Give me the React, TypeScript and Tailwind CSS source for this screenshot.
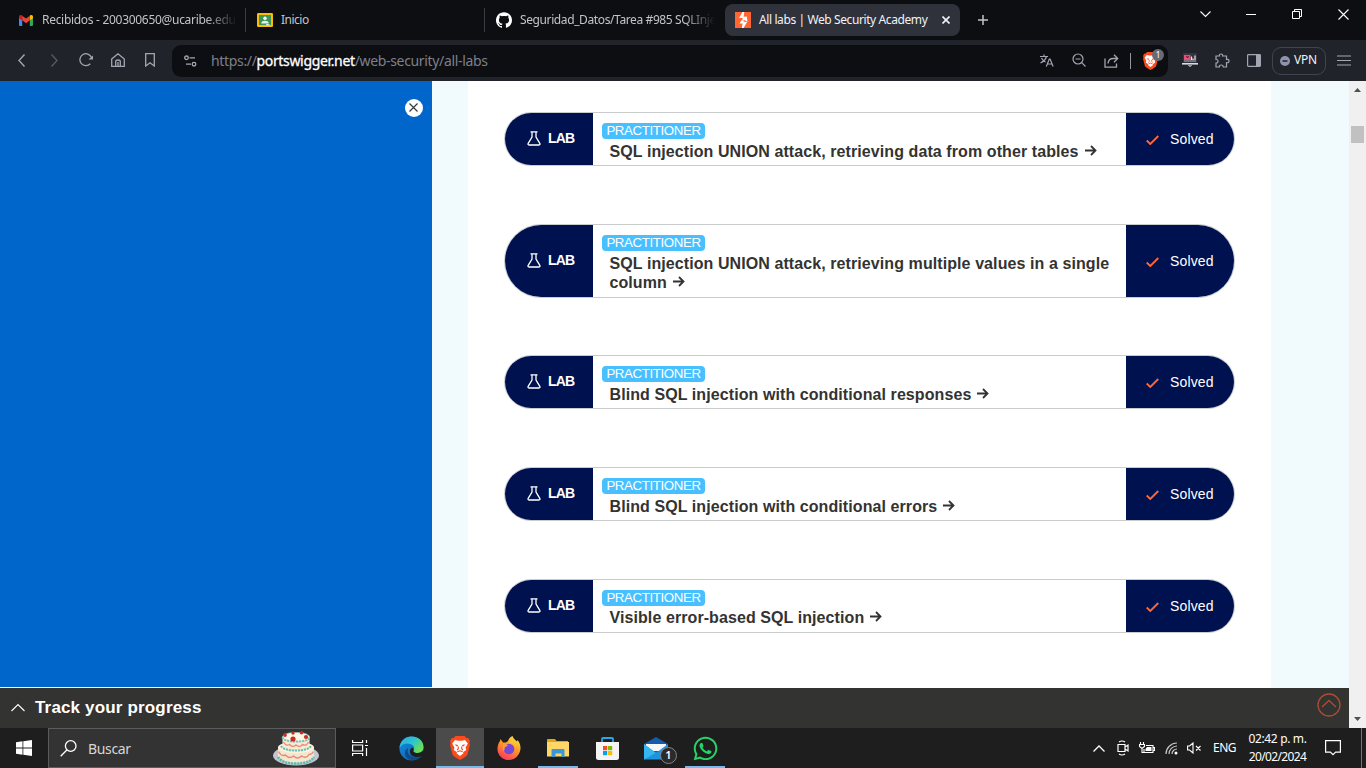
import type { ReactNode } from "react";
import { SiGithub } from "react-icons/si";
import { FaWhatsapp } from "react-icons/fa";

function Box({ children, className = "w-8" }: { children: ReactNode; className?: string }) {
  return <div className={`flex h-full shrink-0 items-center justify-center ${className}`}>{children}</div>;
}

function Line({ d, w = 16, h = 16, sw = 1.3, className = "" }: { d: string; w?: number; h?: number; sw?: number; className?: string }) {
  return (
    <svg width={w} height={h} viewBox={`0 0 ${w} ${h}`} fill="none" stroke="currentColor" strokeWidth={sw} className={`shrink-0 ${className}`}>
      <path d={d} />
    </svg>
  );
}

function GmailIcon() {
  return (
    <svg width="14" height="11" viewBox="0 0 14 11" className="shrink-0">
      <path d="M0 2h3.200v9H1a1 1 0 0 1-1-1z" fill="#4285f4" />
      <path d="M10.800 2H14v8a1 1 0 0 1-1 1h-2.200z" fill="#34a853" />
      <path d="M0 1.700C0 0 2 -.5 3.200.5V5.500L0 3.200z" fill="#c5221f" />
      <path d="M14 1.700C14 0 12-.5 10.800.5V5.500L14 3.200z" fill="#fbbc04" />
      <path d="M3.200.7L7 3.500 10.800.7V5.300L7 8.200 3.200 5.300z" fill="#ea4335" />
    </svg>
  );
}

function ClassroomIcon() {
  return (
    <svg width="16" height="14" viewBox="0 0 16 14" className="shrink-0">
      <rect width="16" height="14" rx="1.200" fill="#fbbc04" />
      <rect x="2" y="2" width="12" height="10" fill="#3c9657" />
      <circle cx="8" cy="5.300" r="1.700" fill="#fff" />
      <path d="M4.200 10.500c0-2 2-2.700 3.800-2.700s3.800.7 3.800 2.700z" fill="#e6f4ea" />
      <path d="M9 11h3.500v1.500H9z" fill="#d5e0d5" />
    </svg>
  );
}

function PortSwiggerIcon() {
  return (
    <svg width="16" height="16" viewBox="0 0 16 16" className="shrink-0">
      <rect width="16" height="16" fill="#ff6633" />
      <path d="M7.500 0H9.300L8.600 4.700H11.800L9.500 8H7.300L7.800 6H4z" fill="#fff" />
      <path d="M8.500 16H6.900L7.500 11.500H4.500L6.500 8.300h2.300L8.500 9.800H12.300z" fill="#fff" />
      <path d="M9.500 4.700h2.300L12.500 9.500 9 8z" fill="#fff" />
    </svg>
  );
}

function TabStrip() {
  return (
    <div className="flex h-10 items-center bg-[#0d0e12] text-[12px] text-[#c3c4c8]">
      <div className="flex h-6 w-[246px] items-center border-r border-[#3a3c43] pl-[19px]">
        <GmailIcon />
        <div className="ml-[9px] w-[195px] whitespace-nowrap tracking-[-0.3px] [mask-image:linear-gradient(to_right,black_84%,transparent)]">
          Recibidos - 200300650@ucaribe.edu
        </div>
      </div>
      <div className="flex h-6 w-[239px] items-center border-r border-[#3a3c43] pl-[11px]">
        <ClassroomIcon />
        <span className="ml-2 tracking-[-0.5px]">Inicio</span>
      </div>
      <div className="flex h-6 w-[240px] items-center pl-[11px]">
        <SiGithub size={16} className="shrink-0 text-white" />
        <div className="ml-2 w-[195px] whitespace-nowrap tracking-[-0.39px] [mask-image:linear-gradient(to_right,black_84%,transparent)]">
          Seguridad_Datos/Tarea #985 SQLInje
        </div>
      </div>
      <div className="flex h-8 w-[235px] items-center rounded-lg bg-[#2f323b] pl-[10px] text-[#f2f3f7]">
        <PortSwiggerIcon />
        <div className="ml-2 w-[180px] whitespace-nowrap tracking-[-0.4px]">All labs | Web Security Academy</div>
        <Line w={8} h={8} sw={1.6} d="M.5.5l7 7M7.500.5l-7 7" className="ml-[3px]" />
      </div>
      <Box className="w-[46px]"><Line w={10} h={10} sw={1.5} d="M5 0v10M0 5h10" /></Box>
      <div className="ml-auto flex h-7 items-center self-start text-white">
        <Box className="w-[46px]"><Line w={11} h={7} sw={1.1} d="M.5.5l5 5 5-5" /></Box>
        <Box className="w-[46px]"><Line w={10} h={2} sw={1} d="M0 1.500h10" /></Box>
        <Box className="w-[46px]"><Line w={10} h={10} sw={1} d="M.5 2.500h7v7h-7zM2.500 2.500v-2h7v7h-2" /></Box>
        <Box className="w-[46px]"><Line w={11} h={11} sw={1.1} d="M.5.5l10 10M10.500.5l-10 10" /></Box>
      </div>
    </div>
  );
}

function BraveLion({ small }: { small?: boolean }) {
  return (
    <svg viewBox="0 0 20 24" className={small ? "h-[18px] w-[15px]" : "h-6 w-5"}>
      <path d="M5.500 0h9l2 2 2 .3 1.500 3-.7 2L20 9l-2.500 9.500Q17 20 10 24 3 20 2.500 18.500L0 9l.7-1.700L0 5.300l1.500-3 2-.3z" fill="#fb4a1c" />
      <path d="M5 4l3 .7h4L15 4l2.800 3.500-2.300 4.200.8 2.300-3.300 2.200.5 1L10 20l-3.500-2.800.5-1L3.700 14l.8-2.300L2.200 7.500z" fill="#fff" />
      <path d="M5 8.200l3 .9-.4 1.400L6 10zM15 8.200l-3 .9.4 1.400L14 10z" fill="#fb4a1c" />
      <path d="M8.300 10.500v2.200L7 14.200M11.700 10.500v2.200l1.300 1.500M7.300 15.800L10 14.800l2.700 1" fill="none" stroke="#fb4a1c" strokeWidth="1.100" />
    </svg>
  );
}

function Toolbar() {
  return (
    <div className="flex h-[41px] items-center bg-[#21232b] pl-[6px] text-[#a3a6b2]">
      <Box><Line w={8} h={13} sw={1.4} d="M6.500.5l-5.500 6 5.500 6" /></Box>
      <Box><Line w={8} h={13} sw={1.4} d="M1.500.5l5.500 6-5.500 6" className="text-[#565963]" /></Box>
      <Box>
        <svg width="15" height="14" viewBox="0 0 15 14" className="-mt-px shrink-0" fill="none" stroke="currentColor" strokeWidth="1.300">
          <path d="M11.300 10.800a6 6 0 1 1 1.200-6.300" />
          <path d="M14 2.500V6.500H9.500z" fill="currentColor" stroke="none" />
        </svg>
      </Box>
      <Box><Line w={14} h={14} sw={1.3} d="M.7 6L7 .8 13.300 6v7.300H.7zM4.700 13V8.500q0-1.500 2.300-1.500t2.300 1.500V13M7 9v4" className="-mt-px" /></Box>
      <Box><Line w={10} h={14} sw={1.3} d="M.7.7h8.600v12.300L5 9.800.7 13z" className="-mt-px" /></Box>
      <div className="ml-[6px] flex h-8 w-[996px] items-center rounded-[9px] bg-[#0d0e12] pl-[2px]">
        <Box>
          <svg width="13" height="12" viewBox="0 0 13 12" fill="none" stroke="currentColor" strokeWidth="1.300">
            <circle cx="2.500" cy="2.800" r="1.800" /><path d="M5.500 2.800H11M2 9.200h5" /><circle cx="10" cy="9.200" r="1.800" />
          </svg>
        </Box>
        <div className="-mt-px ml-[5px] whitespace-nowrap text-[14px] tracking-[-0.34px] text-[#7d808a]">
          https://<span className="text-white [-webkit-text-stroke:0.3px_white]">portswigger.net</span>/web-security/all-labs
        </div>
        <div className="ml-auto flex h-full items-center pr-[2px]">
          <Box><Line w={14} h={13} sw={1.2} d="M0 2.500h8M4 .5v2M6.500 2.500Q5.500 6.500.5 9M1.500 4Q3 7 5.500 8M6.300 12.500l3-7.500h.8l3 7.500M7.500 10h4.500" /></Box>
          <Box><Line w={14} h={14} sw={1.2} d="M11 6A5 5 0 1 1 1 6A5 5 0 1 1 11 6M9.700 9.700l3.800 3.800M3.500 6h5" className="-mt-px" /></Box>
          <Box><Line w={15} h={14} sw={1.3} d="M1 4.500v8.700h11.500V9.500M4 9.500Q4.500 4.500 9 4.500h4.500M10 .8l3.700 3.700L10 8.200" /></Box>
          <div className="mx-[3px] h-4 w-px bg-[#9497a2]" />
          <div className="relative flex h-8 w-8 items-center justify-center">
            <BraveLion small />
            <div className="absolute top-[4px] left-[18px] flex size-3 items-center justify-center rounded-full bg-[#686a77] text-[8px] text-white">1</div>
          </div>
        </div>
      </div>
      <div className="ml-[6px] flex h-full items-center">
        <Box>
          <svg width="16" height="15" viewBox="0 0 16 15">
            <path d="M1 0h14v10H1z" fill="#34343f" /><path d="M2 2h6.500v5H2z" fill="#f34b78" /><path d="M4.500 3l1 2 1-2" stroke="#5b1630" fill="none" /><path d="M9.500 3.500v3.500M11 5.500v1.500M13 2.500v4.500" stroke="#e8eaef" strokeWidth="1.200" /><path d="M2 8h12" stroke="#aab0ba" /><path d="M0 10.800h16" stroke="#d9dbe0" strokeWidth="1.600" /><path d="M6 12h4v1H9v1H7v-1H6z" fill="#8794a1" />
          </svg>
        </Box>
        <Box><Line w={15} h={15} sw={1.2} d="M1 3h3.500Q4 1 6 1t1.600 2H11.500v3.500Q14 6 14 8t-2.500 1.700V14H8.300Q8.300 12 6.300 12T4.300 14H1V10Q3 10 3 8.200T1 6.500z" /></Box>
        <Box>
          <svg width="14" height="13" viewBox="0 0 14 13"><rect x=".6" y=".6" width="12.800" height="11.800" rx=".8" fill="none" stroke="currentColor" strokeWidth="1.200" /><path d="M9 1h4.500v11H9z" fill="currentColor" /></svg>
        </Box>
        <div className="ml-[2px] flex h-7 w-[54px] items-center rounded-[9px] border border-[#41444f] pl-[7px] text-[12px] text-[#f0f1f5]">
          <svg width="10" height="10" viewBox="0 0 10 10" className="shrink-0"><circle cx="5" cy="5" r="5" fill="#8f93ab" /><path d="M2.500 5h5" stroke="#21232b" strokeWidth="1.500" /></svg>
          <span className="-mt-px ml-1 tracking-[-0.2px]">VPN</span>
        </div>
        <Box className="ml-[2px] w-8"><Line w={14} h={11} sw={1.2} d="M0 1h14M0 5.500h14M0 10h14" /></Box>
      </div>
    </div>
  );
}

function Arrow() {
  return <Line w={12} h={11} sw={1.8} d="M0 5.500h11M6 1l4.500 4.500L6 10" className="ml-[6px] inline-block align-[1px]" />;
}

const labs = [
  { title: "SQL injection UNION attack, retrieving data from other tables", size: "h-[54px]", gap: "mt-[31px]", lift: "mt-[3px]" },
  { title: "SQL injection UNION attack, retrieving multiple values in a single column", size: "h-[74px]", gap: "mt-[58px]", lift: "mt-[3px]" },
  { title: "Blind SQL injection with conditional responses", size: "h-[54px]", gap: "mt-[57px]", lift: "mt-[3px]" },
  { title: "Blind SQL injection with conditional errors", size: "h-[54px]", gap: "mt-[58px]", lift: "mt-[3px]" },
  { title: "Visible error-based SQL injection", size: "h-[54px]", gap: "mt-[58px]", lift: "mt-[2px]" },
];

function LabRow({ title, size, gap, lift }: { title: string; size: string; gap: string; lift: string }) {
  return (
    <div className={`flex w-[731px] overflow-hidden rounded-full border border-[#c8cccd] bg-white ${size} ${gap}`}>
      <div className="flex w-[88px] shrink-0 items-center bg-[#00114f] pb-[2px] pl-[22px] text-white">
        <Line w={14} h={15} sw={1.3} d="M3.500.8h7M5 1v5L1.200 12.300Q.5 14 2 14h10q1.500 0 .8-1.700L9 6V1" />
        <span className="ml-[7px] text-[14px] font-bold tracking-[-0.8px]">LAB</span>
      </div>
      <div className="w-[533px] shrink-0 pt-[10px] pl-[9px]">
        <div className="flex h-4 w-[103px] items-center justify-center rounded-[4px] bg-[#48bfff] text-[13.300px] leading-4 whitespace-nowrap text-white">
          <span className="-mt-px tracking-[-0.4px]">PRACTITIONER</span>
        </div>
        <div className={`ml-[7.500px] text-[16px] leading-[19px] font-bold tracking-[0.085px] text-[#333332] ${lift}`}>
          {title}
          <Arrow />
        </div>
      </div>
      <div className="flex flex-1 items-center bg-[#00114f] pl-5 text-white">
        <Line w={13} h={10} sw={1.9} d="M.7 5.500L4.300 9 12.300 1" className="mt-[2px] text-[#ff6633]" />
        <span className="ml-[11px] text-[14px] tracking-[0.15px]">Solved</span>
      </div>
    </div>
  );
}

function Page() {
  return (
    <div className="flex h-[647px]">
      <div className="flex w-[1349px] flex-col">
        <div className="flex h-[607px] bg-[#f1fafc]">
          <div className="flex h-[606px] w-[432px] justify-end bg-[#0066cc] pt-[18px] pr-[9px]">
            <div className="flex size-[18px] items-center justify-center rounded-full bg-white text-[#333332]">
              <Line w={9} h={9} sw={1.1} d="M.5.5l8 8M8.500.5l-8 8" className="-mt-[2px] -ml-px" />
            </div>
          </div>
          <div className="ml-9 w-[803px] bg-white pl-9">
            {labs.map((lab) => <LabRow key={lab.title} {...lab} />)}
          </div>
        </div>
        <div className="flex h-10 items-center bg-[#333332] pr-[8px] pl-[11px] text-white">
          <Line w={14} h={9} sw={1.1} d="M.5 8L7 1.500 13.500 8" className="-mt-[2px]" />
          <span className="ml-[10px] text-[17px] font-bold tracking-[0.16px]">Track your progress</span>
          <svg width="24" height="24" viewBox="0 0 24 24" fill="none" stroke="#a84e33" strokeWidth="1.300" className="-mt-[6px] ml-auto">
            <circle cx="12" cy="12" r="11" /><path d="M5 14l7-6.500 7 6.500" />
          </svg>
        </div>
      </div>
      <div className="flex w-[17px] flex-col items-center bg-[#f0f0f0] pt-[7px] pb-[7px]">
        <svg width="7" height="4" viewBox="0 0 7 4"><path d="M0 4l3.500-4L7 4z" fill="#505050" /></svg>
        <div className="mt-[34px] h-[17px] w-[13px] bg-[#c1c1c1]" />
        <svg width="7" height="4" viewBox="0 0 7 4" className="mt-auto"><path d="M0 0l3.500 4L7 0z" fill="#505050" /></svg>
      </div>
    </div>
  );
}

function Cake() {
  return (
    <svg width="46" height="36" viewBox="0 0 46 36" className="shrink-0">
      <ellipse cx="23" cy="25.500" rx="23" ry="10" fill="#c3c5d0" />
      <path d="M5 17.500v9.500q3 6.500 18 6.500T41 27v-9.500z" fill="#f3e7cf" />
      <ellipse cx="23" cy="17.500" rx="18" ry="5.500" fill="#fff1da" />
      <path d="M9.500 7v9q3 4 13.500 4t13.500-4V7z" fill="#f8ead3" />
      <ellipse cx="23" cy="7" rx="13.500" ry="4.500" fill="#fff6e4" />
      <g fill="none" strokeWidth="2" strokeDasharray="2.200 .8">
        <path d="M9.500 7q1 4.500 13.500 4.500T36.500 7" stroke="#73c5ba" />
        <path d="M9.500 6.500Q12 2.500 23 2.500t13.500 4" stroke="#8fd0c5" strokeWidth="1" />
        <path d="M8 16q3 4.500 15 4.500T38 16" stroke="#66bfb4" />
        <path d="M5 27q4 6.500 18 6.500T41 27" stroke="#5dbbb0" strokeWidth="2.500" />
      </g>
      <path d="M10.500 12q2.500 4.500 6 2.500 3 3.500 6.500.5 4 3 6.500-.5 4 2 6-2.500M5.500 21.500q3 5.500 7 3.500 4 4.500 8 1 4 4 8 0 5 3 7.500-1.500 3 0 4.500-3" stroke="#e98a7c" strokeWidth="1.400" fill="none" />
      <g fill="#c82d2b"><circle cx="12" cy="5" r="1.900" /><circle cx="20" cy="3" r="1.700" /><circle cx="28.500" cy="2.800" r="1.800" /><circle cx="33" cy="7" r="2.100" /><circle cx="20" cy="9" r="2.600" /></g>
    </svg>
  );
}

function EdgeIcon() {
  return (
    <svg width="25" height="25" viewBox="0 0 25 25">
      <defs>
        <linearGradient id="edge-top" x1="0" y1="0" x2="1" y2=".6"><stop offset="0" stopColor="#2caae7" /><stop offset=".55" stopColor="#2cc4cf" /><stop offset="1" stopColor="#70df4c" /></linearGradient>
        <linearGradient id="edge-low" x1="0" y1="0" x2="1" y2="1"><stop offset="0" stopColor="#168ee2" /><stop offset="1" stopColor="#0c59a4" /></linearGradient>
      </defs>
      <circle cx="12.500" cy="12.500" r="12" fill="url(#edge-low)" />
      <path d="M.5 12C1 5 6 .5 12.500.5c7 0 12 4.500 12 10.500 0 4-3 6-6 6-3.500 0-4.500-1.500-4-2.700 1-1.500 1-3.300-.5-4.800C10.500 6.500 3.500 6.500.5 12z" fill="url(#edge-top)" />
      <path d="M9 12c-2 7 4 11.500 14 8-5 6-16 5.500-17-2-.3-3 1-5 3-6z" fill="#114a8b" />
      <path d="M14.500 14.300c-.5 1.200.5 2.700 4 2.700 2 0 4-.5 5.300-2.200L25 18l-2 2c-5 2-11 1-12-3.500-.4-2 .4-4 2-5 1.800.8 2 2 1.500 2.800z" fill="#1e1e1e" />
    </svg>
  );
}

function FirefoxIcon() {
  return (
    <svg width="24" height="24" viewBox="0 0 24 24">
      <defs><linearGradient id="fox" x1=".8" y1="0" x2=".3" y2="1"><stop offset="0" stopColor="#ffe53c" /><stop offset=".5" stopColor="#ff9225" /><stop offset="1" stopColor="#fb3662" /></linearGradient></defs>
      <path d="M15.500 0c1 3 3 4 4.500 5.500L20.500 4C23 7 24 10.500 23.300 14 22 20 17.500 24 12 24 5 24 0 18.500.5 12 .8 9 1.500 7 3 5L3.500 3l2.500 3.500h3l2-1.500c1-3 2.500-4 4.500-5z" fill="url(#fox)" />
      <circle cx="12" cy="13" r="5.300" fill="#7647d8" />
      <path d="M5.500 8.500c2-1 4-.5 5.500.7l-2 1.500c-1.500.6-2 2-1 3l-2 1z" fill="#ff9b2b" />
      <path d="M12 7c4-1 7 1.500 6.500 6 1.500-4-.5-8-5.500-7.500z" fill="#ffc63e" />
    </svg>
  );
}

function FolderIcon() {
  return (
    <svg width="22" height="19" viewBox="0 0 22 19">
      <path d="M0 1q0-1 1-1h7l1.500 2H21v5H0z" fill="#e5a50f" /><path d="M0 3h22v14.500H0z" fill="#ffd766" /><path d="M4.500 11q0-1 1-1h11q1 0 1 1v7h-3v-3.500h-6V18h-4z" fill="#3b97d8" />
    </svg>
  );
}

function StoreIcon() {
  return (
    <svg width="23" height="23" viewBox="0 0 23 23">
      <path d="M6 6V2q0-1 1-1h9q1 0 1 1v4" stroke="#28a8e8" strokeWidth="1.800" fill="none" /><path d="M0 5h23v15.500q0 2.500-2.500 2.500h-18Q0 23 0 20.500z" fill="#f4f4f4" />
      <path d="M7 9h4.200v4.200H7z" fill="#f25022" /><path d="M12 9h4.200v4.200H12z" fill="#7fba00" /><path d="M7 14h4.200v4.200H7z" fill="#00a4ef" /><path d="M12 14h4.200v4.200H12z" fill="#ffb900" />
    </svg>
  );
}

function MailIcon() {
  return (
    <svg width="24" height="23" viewBox="0 0 24 23"><path d="M0 7l12-7 12 7v10H0z" fill="#145da8" /><path d="M2 7h20v7H2z" fill="#f7f8fa" /><path d="M0 7l12 9L24 7v15.500H0z" fill="#1d94e0" /><path d="M0 22.500L14 14.500l-2 1.500L0 7z" fill="#35b6ef" /></svg>
  );
}

function TaskButton({ children, active, open }: { children: ReactNode; active?: boolean; open?: boolean }) {
  return (
    <div className={`relative flex h-10 w-12 items-center justify-center ${active ? "bg-[#4b4b4b]" : ""}`}>
      {children}
      {(active || open) && <div className={`absolute bottom-0 h-[2px] bg-[#76b9ed] ${active ? "w-12" : "w-10"}`} />}
    </div>
  );
}

function Taskbar() {
  return (
    <div className="flex h-10 items-center bg-[#1e1e1e] text-white">
      <Box className="w-12"><svg width="16" height="16" viewBox="0 0 16 16" fill="#fff"><path d="M0 2.200L6.500 1.300V7.600H0zM7.300 1.200L16 0V7.600H7.300zM0 8.400H6.500V14.700L0 13.800zM7.300 8.400H16V16L7.300 14.800z" /></svg></Box>
      <div className="flex h-10 w-72 items-center border border-[#5c5c5c] bg-[#333333] pr-4 pl-[11px]">
        <Line w={17} h={17} sw={1.3} d="M16 6A5.300 5.300 0 1 1 5.400 6A5.300 5.300 0 1 1 16 6M6.800 10L.7 16.200" />
        <span className="mt-px ml-[11px] text-[14px] tracking-[-0.35px] text-[#d6d6d6]">Buscar</span>
        <div className="ml-auto"><Cake /></div>
      </div>
      <Box className="w-12"><Line w={16} h={16} sw={1.2} d="M.6 0v2.500h10V0M.6 5h10v6H.6zM.6 16v-2.500h10V16M14.500 0v3M14.500 8v8M13 5.500h3" /></Box>
      <div className="ml-[3px] flex gap-px">
        <TaskButton><EdgeIcon /></TaskButton>
        <TaskButton active><BraveLion /></TaskButton>
        <TaskButton><FirefoxIcon /></TaskButton>
        <TaskButton open><FolderIcon /></TaskButton>
        <TaskButton><StoreIcon /></TaskButton>
        <TaskButton>
          <MailIcon />
          <div className="absolute top-[19px] left-[28px] flex size-[17px] items-center justify-center rounded-full border border-[#858585] bg-[#2a2a2a] text-[11px] font-semibold">1</div>
        </TaskButton>
        <TaskButton open><FaWhatsapp size={27} className="text-[#25d366]" /></TaskButton>
      </div>
      <div className="ml-auto flex h-full items-center">
        <Box className="w-6"><Line w={12} h={7} sw={1.3} d="M.5 6.500L6 1l5.500 5.500" /></Box>
        <Box className="w-6"><Line w={12} h={16} sw={1.2} d="M1 4.500h7v7H1zM8 7l3-2v6L8 9M2 2q3-2 6 0M2 14q3 2 6 0" /></Box>
        <Box className="w-6"><svg width="16" height="13" viewBox="0 0 16 13" fill="none" stroke="#fff" strokeWidth="1.100"><path d="M1.500 0v2M4.500 0v2M.5 2.500h5v2L3 6.500.5 4.500zM3 6v4.500H5M7 3.500h7v7H5V7M14.500 5.500h1v3h-1" /><path d="M8 5h4.500v4H6.500V7z" fill="#fff" stroke="none" /></svg></Box>
        <Box className="w-6"><svg width="13" height="13" viewBox="0 0 13 13" fill="none" stroke="#c5c5c5" strokeWidth="1.200"><path d="M1 12A11 11 0 0 1 12 1M4 12a8 8 0 0 1 8-8M7 12a5 5 0 0 1 5-5" /><circle cx="11" cy="11" r="1.500" fill="#fff" stroke="none" /></svg></Box>
        <Box className="w-[22px]"><Line w={15} h={12} sw={1.1} d="M.6 4h2L6 1v10L2.600 8h-2zM9 4l4.500 4.500M13.500 4L9 8.500" /></Box>
        <span className="ml-2 w-[24px] text-[12px] tracking-[-0.5px]">ENG</span>
        <div className="ml-1 flex w-[73px] flex-col items-center text-[12px] leading-[18px] whitespace-nowrap">
          <span className="tracking-[-0.35px]">02:42 p. m.</span>
          <span className="tracking-[-0.65px]">20/02/2024</span>
        </div>
        <Box className="w-[38px]"><Line w={16} h={16} sw={1.2} d="M.6.6h14.800v11.500h-4.800L8 14.700 5.400 12.100H.6z" /></Box>
        <div className="mr-1 ml-[9px] h-10 w-px bg-[#727272]" />
      </div>
    </div>
  );
}

export default function App() {
  return (
    <div className="h-[768px] w-[1366px] overflow-hidden font-['Noto_Sans',sans-serif]">
      <TabStrip />
      <Toolbar />
      <div className="font-['Liberation_Sans',sans-serif]"><Page /></div>
      <Taskbar />
    </div>
  );
}
